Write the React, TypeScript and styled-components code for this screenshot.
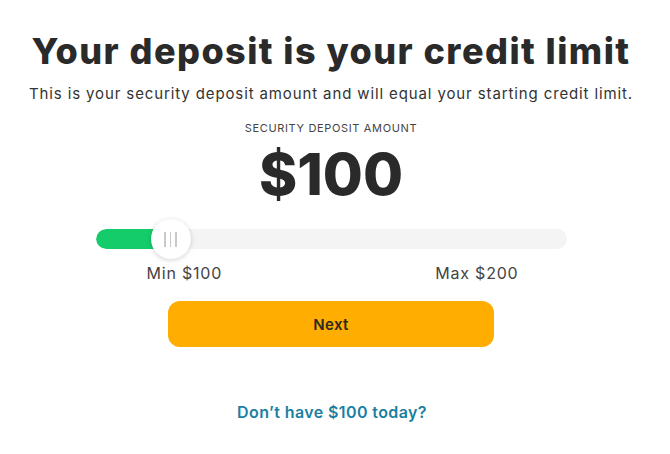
import * as React from 'react'
import styled, { createGlobalStyle } from 'styled-components'

const GlobalStyle = createGlobalStyle`
  html, body {
    margin: 0;
    padding: 0;
    background: #ffffff;
  }

  body {
    font-family: 'Inter', 'Liberation Sans', sans-serif;
    color: #2a2a2a;
  }
`

const Page = styled.main`
  width: 662px;
  display: flex;
  flex-direction: column;
  align-items: center;
  padding-top: 29px;
`

const Title = styled.h1`
  margin: 0;
  font-size: 36px;
  line-height: 44px;
  font-weight: 800;
  letter-spacing: 1.45px;
  color: #2a2a2a;
`

const Subtitle = styled.p`
  margin: 11px 0 0;
  font-size: 15px;
  line-height: 20px;
  letter-spacing: 0.88px;
  color: #333333;
`

const AmountLabel = styled.div`
  margin-top: 17px;
  font-size: 11px;
  line-height: 14px;
  letter-spacing: 0.65px;
  color: #444444;
  text-transform: uppercase;
`

const Amount = styled.div`
  margin-top: 7px;
  font-size: 58px;
  line-height: 64px;
  font-weight: 800;
  color: #2a2a2a;
`

const SliderRow = styled.div`
  position: relative;
  margin-top: 13px;
  width: 471px;
  height: 40px;
  display: flex;
  align-items: center;
`

const Track = styled.div`
  width: 100%;
  height: 20px;
  border-radius: 10px;
  background: #f4f4f4;
  overflow: hidden;
`

const Fill = styled.div`
  height: 100%;
  background: #14cc6a;
  border-radius: 10px 0 0 10px;
`

const Thumb = styled.div`
  position: absolute;
  top: 0;
  width: 40px;
  height: 40px;
  margin-left: -20px;
  border-radius: 50%;
  background: #ffffff;
  box-shadow: 0 1px 5px rgba(0, 0, 0, 0.18);
  display: flex;
  align-items: center;
  justify-content: center;
  gap: 4px;
`

const Grip = styled.span`
  width: 1.5px;
  height: 15px;
  background: #c9c9c9;
`

const Limits = styled.div`
  margin: 4px 0 0 3px;
  width: 372px;
  display: flex;
  justify-content: space-between;
  font-size: 16px;
  line-height: 20px;
  letter-spacing: 0.8px;
  color: #444444;
`

const NextButton = styled.button`
  margin-top: 18px;
  width: 326px;
  height: 46px;
  border: none;
  border-radius: 12px;
  background: #ffad00;
  font-family: inherit;
  font-size: 15px;
  font-weight: 600;
  letter-spacing: 0.4px;
  color: #2e2a20;
  cursor: pointer;
`

const HelpLink = styled.a`
  margin: 55px 0 0 2px;
  font-size: 16px;
  line-height: 20px;
  font-weight: 600;
  letter-spacing: 0.4px;
  color: #1b7fa3;
  text-decoration: none;
  cursor: pointer;
`

const min = 100
const max = 200
const value = 100
// thumb sits slightly right of the track start even at min
const thumbLeft = 75

export default function App() {
  return (
    <>
      <GlobalStyle />
      <Page>
        <Title>Your deposit is your credit limit</Title>
        <Subtitle>This is your security deposit amount and will equal your starting credit limit.</Subtitle>
        <AmountLabel>Security deposit amount</AmountLabel>
        <Amount>${value}</Amount>
        <SliderRow>
          <Track>
            <Fill style={{ width: thumbLeft }} />
          </Track>
          <Thumb style={{ left: thumbLeft }}>
            <Grip />
            <Grip />
            <Grip />
          </Thumb>
        </SliderRow>
        <Limits>
          <span>Min ${min}</span>
          <span>Max ${max}</span>
        </Limits>
        <NextButton>Next</NextButton>
        <HelpLink>Don’t have ${value} today?</HelpLink>
      </Page>
    </>
  )
}
